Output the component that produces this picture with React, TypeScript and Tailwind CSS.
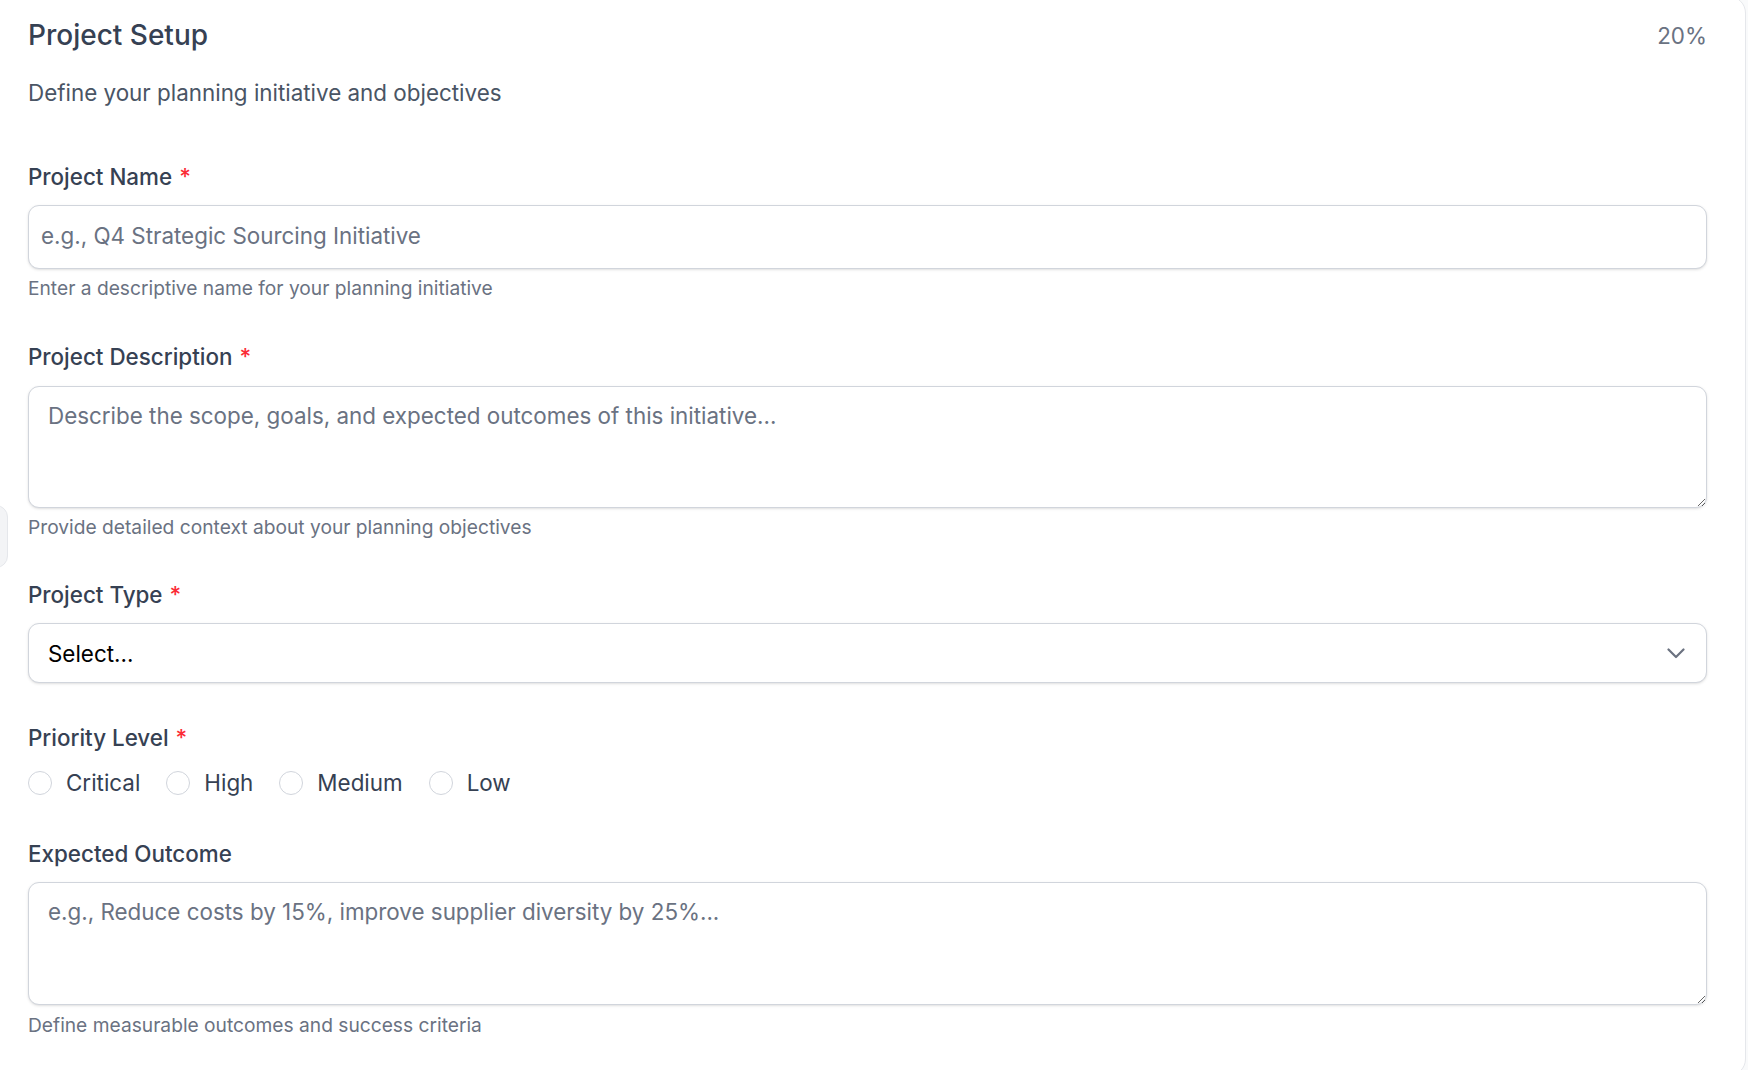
import { useState } from "react";

const priorities = ["Critical", "High", "Medium", "Low"];

function FieldLabel({ text, required }: { text: string; required?: boolean }) {
  return (
    <label className="block mb-[12px] text-[22.4px] leading-[33.6px] font-medium text-gray-700">
      {text}
      {required && <span className="ml-[7px] text-red-500">*</span>}
    </label>
  );
}

function Hint({ text, last }: { text: string; last?: boolean }) {
  return (
    <p className={`${last ? "mt-[6px]" : "mt-[5px]"} text-[19.2px] leading-[28px] text-gray-500`}>{text}</p>
  );
}

export default function App() {
  const [priority, setPriority] = useState("");

  return (
    <div className="relative h-[1070px] w-full overflow-hidden bg-[#f9fafb] font-['Inter',sans-serif]">
      {/* sidebar toggle peeking in from the left */}
      <div className="absolute left-[-30px] top-[505px] h-[63px] w-[38px] rounded-xl bg-[#f3f4f6] border border-gray-200" />

      <div className="-mt-[4px] ml-[-20px] mr-[2px] h-[1080px] rounded-[17px] border border-gray-200 bg-white pl-[47px] pr-[38px] pt-[19px]">
        {/* header */}
        <div className="flex items-center justify-between">
          <h1 className="text-[28px] leading-[39px] font-medium text-gray-700">Project Setup</h1>
          <span className="text-[22.4px] leading-[33.6px] text-gray-500">20%</span>
        </div>
        <p className="mt-[21px] text-[22.4px] leading-[33.6px] text-gray-600">
          Define your planning initiative and objectives
        </p>

        <div className="mt-[50px] flex flex-col gap-[37px]">
          <div>
            <FieldLabel text="Project Name" required />
            <input
              type="text"
              placeholder="e.g., Q4 Strategic Sourcing Initiative"
              className="block h-[64px] w-full rounded-[11px] border border-gray-300 bg-white px-[12px] pb-[4px] text-[22.4px] text-gray-900 shadow-sm outline-none placeholder:text-gray-500"
            />
            <Hint text="Enter a descriptive name for your planning initiative" />
          </div>

          <div className="mt-[1px]">
            <FieldLabel text="Project Description" required />
            <textarea
              placeholder="Describe the scope, goals, and expected outcomes of this initiative..."
              className="block h-[122px] w-full resize-y rounded-[11px] border border-gray-300 bg-white px-[19px] py-[14px] text-[22.4px] leading-[30px] text-gray-900 shadow-sm outline-none placeholder:text-gray-500"
            />
            <Hint text="Provide detailed context about your planning objectives" />
          </div>

          <div>
            <FieldLabel text="Project Type" required />
            <button
              type="button"
              className="flex h-[60px] w-full items-center justify-between rounded-[11px] border border-gray-300 bg-white pl-[19px] pr-[21px] text-[22.4px] text-black shadow-sm"
            >
              <span>Select...</span>
              <svg width="18" height="11" viewBox="0 0 18 11" fill="none" stroke="#6b7280" strokeWidth="2.2" strokeLinecap="round" strokeLinejoin="round">
                <polyline points="1.5,1.5 9,9 16.5,1.5" />
              </svg>
            </button>
          </div>

          <div className="mt-[1px]">
            <FieldLabel text="Priority Level" required />
            <div className="-mt-[1px] flex items-center gap-[26px]">
              {priorities.map((p) => (
                <label key={p} className="flex cursor-pointer items-center gap-[14px]" onClick={() => setPriority(p)}>
                  <span
                    className={
                      priority === p
                        ? "h-[24px] w-[24px] rounded-full border-[7px] border-blue-600 bg-white"
                        : "h-[24px] w-[24px] rounded-full border border-gray-300 bg-white"
                    }
                  />
                  <span className="text-[22.4px] leading-[33.6px] text-gray-700">{p}</span>
                </label>
              ))}
            </div>
          </div>

          <div>
            <FieldLabel text="Expected Outcome" />
            <textarea
              placeholder="e.g., Reduce costs by 15%, improve supplier diversity by 25%..."
              className="block h-[123px] w-full resize-y rounded-[11px] border border-gray-300 bg-white px-[19px] py-[14px] text-[22.4px] leading-[30px] text-gray-900 shadow-sm outline-none placeholder:text-gray-500"
            />
            <Hint text="Define measurable outcomes and success criteria" last />
          </div>
        </div>
      </div>
    </div>
  );
}
